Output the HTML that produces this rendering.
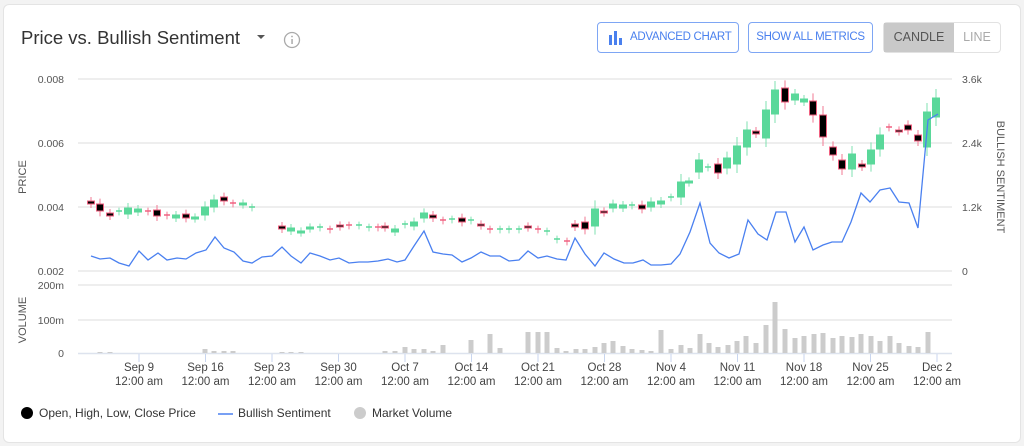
<!DOCTYPE html>
<html><head><meta charset="utf-8"><style>
body{margin:0;background:#f3f3f3;width:1024px;height:446px;overflow:hidden;font-family:"Liberation Sans",sans-serif}
.card{position:absolute;left:3px;top:4px;width:1016px;height:437px;background:#fff;border:1px solid #e4e4e4;border-radius:6px}
.title{position:absolute;left:21px;top:27px;font-size:18.5px;color:#333}
.btn{position:absolute;top:22px;height:31px;border:1px solid #7ea6f4;border-radius:4px;color:#4a80ee;font-size:11.5px;line-height:29px;box-sizing:border-box;white-space:nowrap;letter-spacing:-0.3px}
svg{position:absolute;left:0;top:0}
</style></head><body>
<div class="card"></div>
<div class="title">Price vs. Bullish Sentiment</div>
<div class="btn" style="left:597px;width:142px;padding-left:32px">ADVANCED CHART</div>
<div class="btn" style="left:748px;width:125px;text-align:center">SHOW ALL METRICS</div>
<div style="position:absolute;left:883px;top:22px;width:118px;height:31px;border:1px solid #e2e2e2;border-radius:4px;box-sizing:border-box;font-size:12.5px;line-height:29px">
<div style="position:absolute;left:0;top:0;width:70px;height:29px;background:#c9c9c9;color:#555;text-align:center">CANDLE</div>
<div style="position:absolute;left:70px;top:0;width:46px;height:29px;color:#aaa;text-align:center">LINE</div></div>
<svg id="s" width="1024" height="446" xmlns="http://www.w3.org/2000/svg" font-family="Liberation Sans, sans-serif">
<path d="M257 35l4 4 4-4z" fill="#555"/>
<circle cx="292" cy="40" r="7.5" fill="none" stroke="#aaa" stroke-width="1.3"/>
<rect x="291.3" y="39" width="1.5" height="5" fill="#aaa"/><circle cx="292" cy="36.5" r="0.9" fill="#aaa"/>
<rect x="609" y="35" width="3" height="10" fill="#4a80ee"/><rect x="614" y="31" width="3" height="14" fill="#4a80ee"/><rect x="619" y="38" width="3" height="7" fill="#4a80ee"/>
<g id="g"></g>
</svg>
<script>
var g=document.getElementById('g'),h='';
function L(x1,y1,x2,y2,c,w){h+='<line x1="'+x1+'" y1="'+y1+'" x2="'+x2+'" y2="'+y2+'" stroke="'+c+'" stroke-width="'+(w||1)+'"/>';}
function T(x,y,t,a,s,c,tr){h+='<text x="'+x+'" y="'+y+'" font-size="'+(s||10.5)+'" fill="'+(c||'#555')+'" text-anchor="'+(a||'start')+'"'+(tr?' transform="'+tr+'"':'')+'>'+t+'</text>';}
[79,143,207,271,285,320].forEach(function(y){L(78,y,952,y,'#e9e9e9',1.5)});
L(78,353.5,952,353.5,'#dde3ee',1.5);
T(64,83,'0.008','end');T(64,147,'0.006','end');T(64,211,'0.004','end');T(64,275,'0.002','end');
T(64,289,'200m','end');T(64,324,'100m','end');T(64,357,'0','end');
T(962,83,'3.6k');T(962,147,'2.4k');T(962,211,'1.2k');T(962,275,'0');
T(26,177,'PRICE','middle',11,'#555','rotate(-90 26 177)');
T(26,320,'VOLUME','middle',11,'#555','rotate(-90 26 320)');
T(997,177,'BULLISH SENTIMENT','middle',11,'#555','rotate(90 997 177)');
var ds=['Sep 9','Sep 16','Sep 23','Sep 30','Oct 7','Oct 14','Oct 21','Oct 28','Nov 4','Nov 11','Nov 18','Nov 25','Dec 2'];
ds.forEach(function(d,i){var x=139+i*66.5;L(x,354,x,362,'#c9d6ef');T(x,371,d,'middle',11.5,'#444');T(x,385,'12:00 am','middle',11.5,'#444');});
var v=[[100,1],[110,1],[205,4],[214,2],[224,2],[233,2],[282,1],[291,1],[301,1],[385,2],[395,2],[405,6],[414,4],[424,4],[433,2],[443,8],[471,13],[490,19],[500,5],[528,21],[538,21],[547,21],[557,5],[566,2],[576,4],[585,4],[595,6],[604,10],[613,12],[623,7],[632,4],[642,3],[651,2],[661,23],[671,4],[681,8],[690,5],[700,19],[709,10],[718,6],[728,8],[737,12],[746,17],[756,10],[766,28],[775,51],[785,24],[795,15],[804,17],[814,19],[823,20],[833,15],[842,17],[852,16],[861,19],[871,17],[880,12],[890,17],[899,10],[909,7],[918,6],[928,21]];
v.forEach(function(b){h+='<rect x="'+(b[0]-2.5)+'" y="'+(353-b[1])+'" width="5" height="'+b[1]+'" fill="#cccccc"/>';});
var c=[[91,201,204,'r'],[100,204,211,'b'],[110,213,216,'b'],[119,211,212,'g'],[128,208,214,'g'],[138,209,212,'g'],[148,211,212,'r'],[157,210,216,'b'],[167,215,216,'r'],[176,215,218,'g'],[186,214,218,'b'],[195,217,219,'g'],[205,207,215,'g'],[214,200,207,'g'],[224,197,201,'b'],[233,203,204,'r'],[243,203,205,'g'],[252,207,208,'g'],
[282,226,229,'b'],[291,228,231,'g'],[301,231,233,'g'],[310,227,229,'g'],[320,227,228,'g'],[330,229,230,'r'],[340,225,227,'r'],[349,225,226,'r'],[359,225,226,'g'],[369,227,228,'g'],[378,227,228,'r'],[385,226,228,'r'],[395,229,232,'g'],[405,224,225,'g'],[414,222,226,'g'],[424,213,218,'g'],[433,215,218,'b'],[443,220,221,'r'],[452,219,220,'g'],[462,218,222,'b'],[471,220,221,'g'],[481,224,226,'b'],[490,229,230,'r'],[500,229,230,'g'],[509,229,230,'g'],[519,229,230,'g'],[528,226,228,'b'],[538,229,230,'r'],[547,231,232,'g'],[557,239,240,'g'],[567,241,242,'r'],[575,224,227,'b'],[585,222,229,'b'],[595,209,226,'g'],[604,211,213,'b'],[613,204,208,'g'],[623,205,208,'g'],[632,205,206,'g'],[642,205,209,'b'],[651,202,207,'g'],[661,201,204,'g'],
[671,197,198,'g'],[681,182,197,'g'],[689,181,183,'g'],[699,160,172,'g'],[708,167,168,'g'],[718,164,173,'b'],[727,158,168,'g'],[737,146,164,'g'],[747,130,147,'g'],[756,131,134,'b'],[766,110,138,'g'],[775,90,114,'g'],[785,88,102,'b'],[795,94,100,'g'],[804,99,102,'g'],[813,101,115,'b'],[823,115,137,'b'],[833,147,155,'b'],[842,160,169,'b'],[852,154,169,'g'],[862,164,167,'b'],[871,150,164,'g'],[880,135,149,'g'],[889,127,128,'r'],[899,130,132,'b'],[908,125,130,'b'],[918,135,141,'b'],[927,112,147,'g'],[936,98,117,'g']];
c.forEach(function(k){var x=k[0],t=k[1],b=k[2],col=k[3]=='g'?'#5ad89a':'#f06080',len=(b-t);var wt=t-3-Math.min(6,len/3),wb=b+3+Math.min(6,len/3);
L(x,wt,x,wb,k[3]=='g'?'#7fe0b0':'#f27a93');
if(len<2){L(x-3,t,x+3,t,col,1.5);}
else h+='<rect x="'+(x-3.5)+'" y="'+t+'" width="7" height="'+len+'" fill="'+(k[3]=='g'?'#5ad89a':'#000')+'" stroke="'+(k[3]=='g'?'#5ad89a':'#f06080')+'" stroke-width="1"/>';});
var p=[[91,256],[100,259],[110,258],[119,263],[129,266],[139,251],[148,260],[158,253],[167,260],[177,258],[186,259],[196,253],[206,250],[215,237],[224,248],[234,252],[243,261],[252,263],[262,257],[272,256],[282,247],[291,256],[301,263],[310,253],[320,256],[330,260],[339,258],[349,263],[359,262],[368,262],[378,261],[388,259],[397,262],[405,260],[414,246],[424,231],[433,252],[443,254],[452,255],[462,262],[471,258],[481,252],[490,256],[500,256],[509,261],[519,260],[528,251],[538,258],[547,256],[557,259],[566,260],[575,238],[585,254],[595,266],[604,253],[614,259],[624,263],[633,263],[643,260],[651,265],[661,265],[671,264],[680,254],[690,232],[700,203],[710,243],[719,253],[729,258],[739,254],[748,220],[758,234],[767,240],[776,212],[786,212],[795,242],[804,227],[813,250],[823,245],[832,242],[842,242],[851,222],[861,193],[870,202],[880,190],[890,188],[899,202],[909,203],[918,228],[928,120],[938,114]];
h+='<polyline fill="none" stroke="#4a80f0" stroke-width="1.3" points="'+p.map(function(q){return q.join(',')}).join(' ')+'"/>';
h+='<circle cx="27" cy="413" r="6" fill="#000"/>';T(39,417,'Open, High, Low, Close Price','start',12,'#333');
L(218,414,233,414,'#4a80f0',1.5);T(238,417,'Bullish Sentiment','start',12,'#333');
h+='<circle cx="360" cy="413" r="6" fill="#ccc"/>';T(372,417,'Market Volume','start',12,'#333');
g.innerHTML=h;
</script>
</body></html>
